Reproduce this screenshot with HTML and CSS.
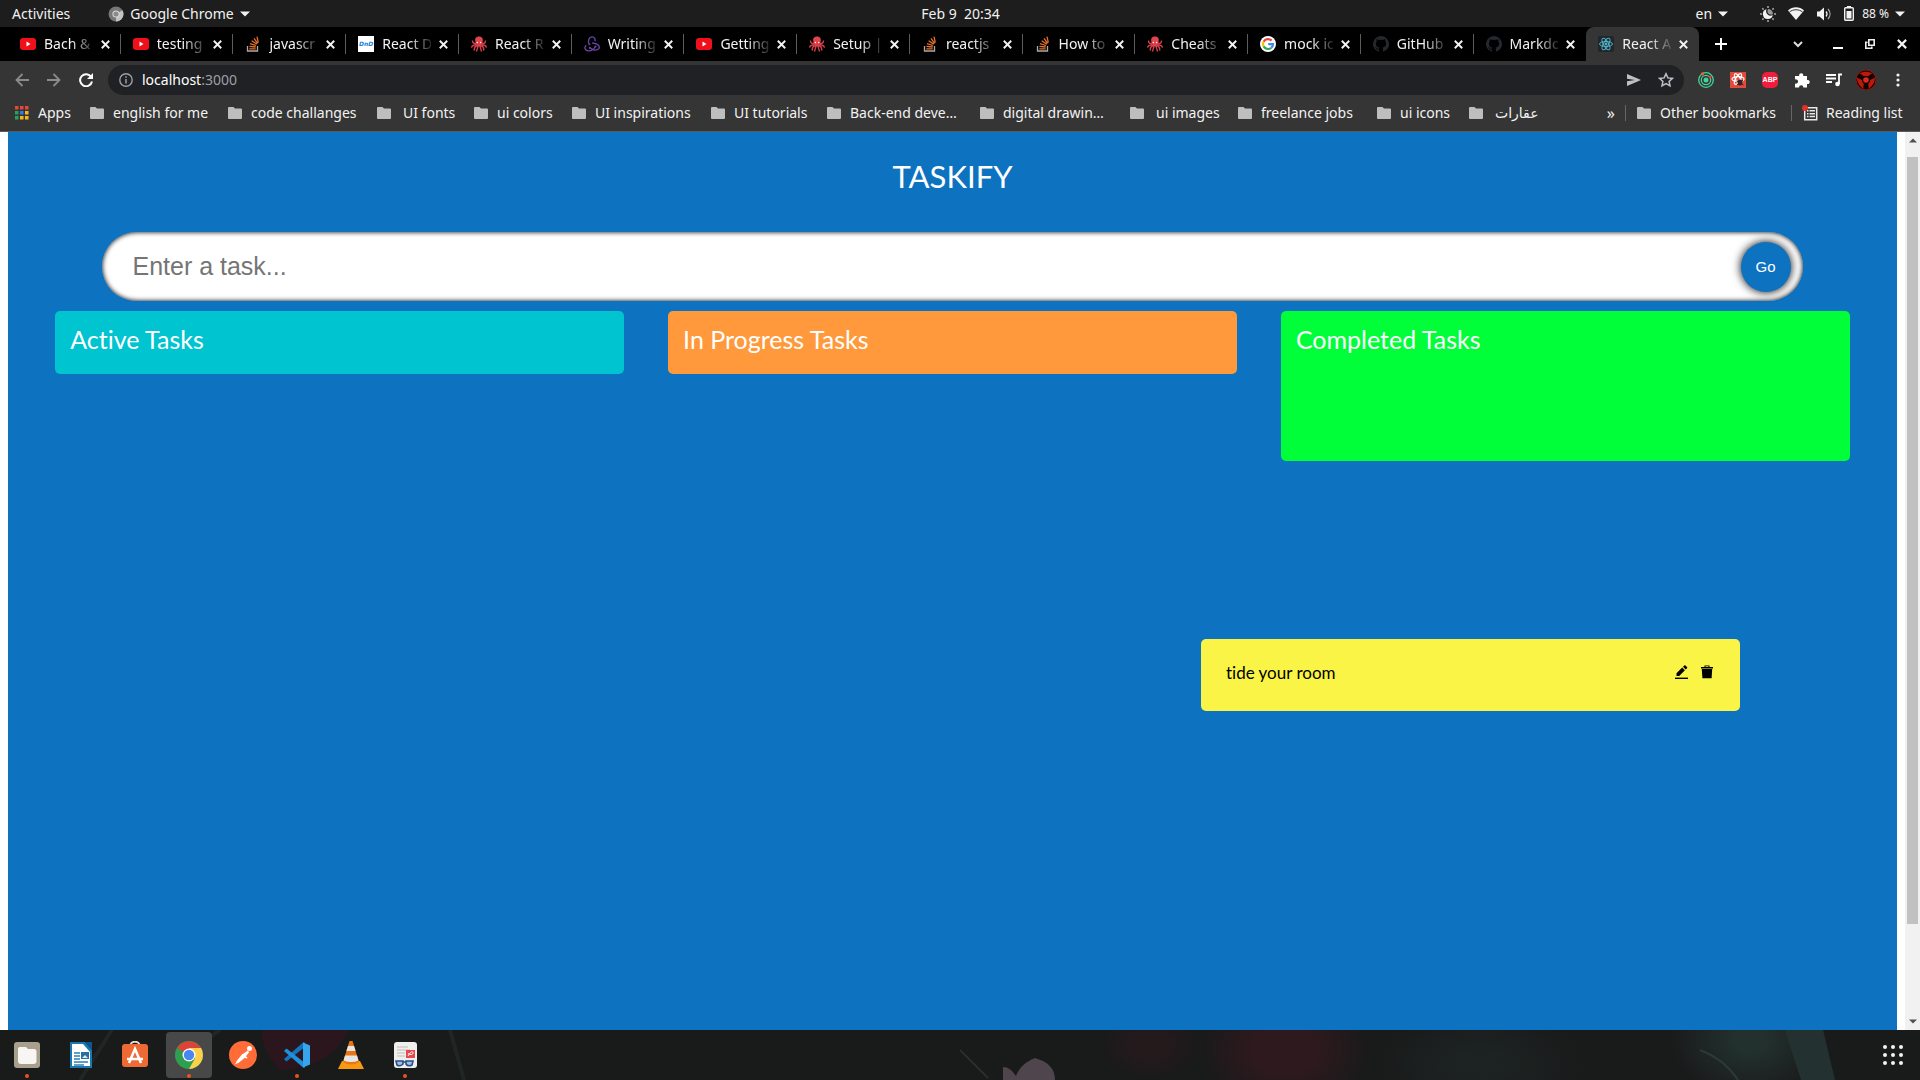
FILE: index.html
```html
<!DOCTYPE html>
<html lang="en">
<head>
<meta charset="utf-8">
<title>React App</title>
<link rel="stylesheet" href="styles.css">
</head>
<body>
<svg class="sprite" aria-hidden="true">
  <symbol id="youtube" viewBox="0 0 16 16"><rect y="2" width="16" height="12" rx="3" fill="#f0101a"/><path d="M6.500 5.500v5l4-2.500z" fill="#fff"/></symbol>
  <symbol id="stack" viewBox="0 0 16 16"><path d="M2.500 10v5h10v-5" fill="none" stroke="#a8abae" stroke-width="1.300"/><path d="M4.300 12.800h6.400M4.400 10.300l6.300.7M5 7.600l6 1.900M6.600 4.700l5.200 3.400M9 2.300l3.600 5M12 .6l1.300 6" stroke="#e8702a" stroke-width="1.300"/></symbol>
  <symbol id="octopus" viewBox="0 0 16 16"><path d="M8 .5c3 0 4.200 2.200 3.800 4.300-.3 1.500-1 2.200-.8 3.200H5c.2-1-.5-1.700-.8-3.200C3.800 2.700 5 .5 8 .5z" fill="#e0444c"/><path d="M5 7C3 8 1.500 7 1.500 4.500M5 8.500c-2 .8-4 .5-4.500 3M6 9.500c-2 1-3.500 2-2.500 5M7 9.500c0 2-.8 3-1.500 6M11 7c2 1 3.500 0 3.500-2.500M11 8.500c2 .8 4 .5 4.500 3M10 9.500c2 1 3.500 2 2.500 5M9 9.500c0 2 .8 3 1.500 6" fill="none" stroke="#d8404a" stroke-width="1.400"/><path d="M4.500 7h7L10 10.500H6z" fill="#d8404a"/><circle cx="6.300" cy="6.500" r=".7" fill="#fff"/><circle cx="9.700" cy="6.500" r=".7" fill="#fff"/></symbol>
  <symbol id="redux" viewBox="0 0 16 16"><g fill="none" stroke="#6b46a8" stroke-width="1.300"><path d="M11.500 10.200C10.800 13 7.500 15.200 4 14.800 1 14.500-.2 11.500 2.200 9.300"/><path d="M5.200 7.800C3.500 5.200 5 .8 8 .8c2.600 0 3.600 2.400 3 4.400"/><path d="M6 11.800c2.500 2.500 6.500 3 8.500 1.300 2-2.200-.2-6-6.500-6.300"/></g><g fill="#6b46a8"><circle cx="11.500" cy="10.400" r="1"/><circle cx="5.400" cy="8.200" r="1"/><circle cx="5.800" cy="11.800" r="1"/></g></symbol>
  <symbol id="google" viewBox="0 0 16 16"><circle cx="8" cy="8" r="8" fill="#fff"/><g fill="none" stroke-width="2.200"><path d="M11.500 4.600A5 5 0 0 0 3.600 5.700" stroke="#ea4335"/><path d="M3.600 5.700a5 5 0 0 0 0 4.700" stroke="#fbbc05"/><path d="M3.600 10.400A5 5 0 0 0 11.300 11.700" stroke="#34a853"/><path d="M11.300 11.700A5 5 0 0 0 13 8.200H8.200" stroke="#4285f4"/></g></symbol>
  <symbol id="github" viewBox="0 0 16 16"><path fill="#24292f" d="M8 0a8 8 0 0 0-2.500 15.600c.4.100.5-.2.500-.4v-1.500c-2.200.5-2.700-.9-2.700-.9-.4-.9-.9-1.200-.9-1.200-.7-.5.100-.5.100-.5.800.1 1.200.8 1.200.8.700 1.300 1.900.9 2.300.7.100-.5.300-.9.500-1.100-1.800-.2-3.600-.9-3.600-4 0-.8.300-1.600.8-2.100 0-.2-.3-1 .1-2.100 0 0 .7-.2 2.200.8a7.600 7.600 0 0 1 4 0c1.500-1 2.200-.8 2.200-.8.400 1.100.1 1.900.1 2.100.5.500.8 1.300.8 2.100 0 3.100-1.900 3.800-3.700 4 .3.300.6.800.6 1.500v2.200c0 .2.100.5.500.4A8 8 0 0 0 8 0z"/></symbol>
  <symbol id="reactapp" viewBox="0 0 16 16"><rect width="16" height="16" rx="2" fill="#22252a"/><g fill="none" stroke="#4fb3c9"><ellipse cx="8" cy="8" rx="6.500" ry="2.500"/><ellipse cx="8" cy="8" rx="6.500" ry="2.500" transform="rotate(60 8 8)"/><ellipse cx="8" cy="8" rx="6.500" ry="2.500" transform="rotate(120 8 8)"/></g><circle cx="8" cy="8" r="1.400" fill="#4fb3c9"/></symbol>
  <symbol id="close" viewBox="0 0 8 8"><path d="M.7.700l6.600 6.600M7.300.700L.7 7.300" stroke="currentColor" stroke-width="1.700"/></symbol>
  <symbol id="folder" viewBox="0 0 14 12"><path d="M1 0h4.500L7 1.600h6a1 1 0 0 1 1 1V11a1 1 0 0 1-1 1H1a1 1 0 0 1-1-1V1a1 1 0 0 1 1-1z" fill="#bebebe"/></symbol>
  <symbol id="caret" viewBox="0 0 10 6"><path d="M0 .5h10L5 5.500z" fill="#f2f2f2"/></symbol>
</svg>

<header class="panel">
  <div class="panel-left">
    <button class="plain">Activities</button>
    <button class="plain app-menu">
      <svg width="16" height="16" viewBox="0 0 16 16"><circle cx="8" cy="8" r="7.500" fill="#777"/><path d="M8 8l6.500-3.700A7.500 7.500 0 0 1 8 15.500z" fill="#c4c4c4"/><circle cx="8" cy="8" r="3.600" fill="#ddd"/><circle cx="8" cy="8" r="2.600" fill="#8a8a8a"/></svg>
      <span>Google Chrome</span>
      <svg width="10" height="6"><use href="#caret"/></svg>
    </button>
  </div>
  <time class="clock">Feb 9&nbsp; 20:34</time>
  <div class="panel-right">
    <button class="plain lang"><span>en</span><svg width="10" height="6"><use href="#caret"/></svg></button>
    <button class="plain status" aria-label="System menu">
      <svg width="16" height="16" viewBox="0 0 16 16"><g stroke="#aaa" stroke-width="1.500"><path d="M8 0v2M8 14v2M0 8h2M14 8h2M2.300 2.300l1.300 1.300M12.400 12.400l1.300 1.300M2.300 13.700l1.300-1.300M12.400 3.600l1.300-1.300"/></g><path d="M6.500 3.300A5 5 0 1 0 12.800 9 4.500 4.500 0 0 1 6.500 3.300z" fill="#f2f2f2"/><path d="M8 3a5 5 0 0 1 5 5c-3 2-7-1-5-5z" fill="#999"/></svg>
      <svg width="16" height="13" viewBox="0 0 16 13"><path d="M0 3.500C4.500-.8 11.500-.8 16 3.500L8 13z" fill="#f2f2f2"/><path d="M1.500 5C5 2 11 2 14.500 5" fill="none" stroke="#1d1d1d" stroke-width=".9"/></svg>
      <svg width="16" height="14" viewBox="0 0 16 14"><path d="M1 4.500h2.500L8 .5v13L3.500 9.500H1z" fill="#f2f2f2"/><path d="M10 4.500c1.300 1.500 1.300 3.500 0 5" fill="none" stroke="#f2f2f2" stroke-width="1.200"/><path d="M12 2c2.700 3 2.700 7 0 10" fill="none" stroke="#aaa" stroke-width="1.200"/></svg>
      <svg width="10" height="15" viewBox="0 0 10 15"><path d="M3 0h4v2H3z" fill="#f2f2f2"/><rect x=".7" y="1.700" width="8.600" height="12.600" rx="1" fill="none" stroke="#f2f2f2" stroke-width="1.400"/><path d="M2.500 5h5v7.500h-5z" fill="#f2f2f2"/></svg>
      <span class="battery">88 %</span>
      <svg width="10" height="6"><use href="#caret"/></svg>
    </button>
  </div>
</header>

<nav class="tabstrip">
  <div class="tabs">
    <div class="tab"><svg class="fav"><use href="#youtube"/></svg><span>Bach &amp;</span><button aria-label="Close tab"><svg><use href="#close"/></svg></button></div>
    <div class="tab"><svg class="fav"><use href="#youtube"/></svg><span>testing</span><button aria-label="Close tab"><svg><use href="#close"/></svg></button></div>
    <div class="tab"><svg class="fav"><use href="#stack"/></svg><span>javascr</span><button aria-label="Close tab"><svg><use href="#close"/></svg></button></div>
    <div class="tab"><b class="fav dnd">DnD</b><span>React D</span><button aria-label="Close tab"><svg><use href="#close"/></svg></button></div>
    <div class="tab"><svg class="fav"><use href="#octopus"/></svg><span>React R</span><button aria-label="Close tab"><svg><use href="#close"/></svg></button></div>
    <div class="tab"><svg class="fav"><use href="#redux"/></svg><span>Writing</span><button aria-label="Close tab"><svg><use href="#close"/></svg></button></div>
    <div class="tab"><svg class="fav"><use href="#youtube"/></svg><span>Getting</span><button aria-label="Close tab"><svg><use href="#close"/></svg></button></div>
    <div class="tab"><svg class="fav"><use href="#octopus"/></svg><span>Setup |</span><button aria-label="Close tab"><svg><use href="#close"/></svg></button></div>
    <div class="tab"><svg class="fav"><use href="#stack"/></svg><span>reactjs</span><button aria-label="Close tab"><svg><use href="#close"/></svg></button></div>
    <div class="tab"><svg class="fav"><use href="#stack"/></svg><span>How to</span><button aria-label="Close tab"><svg><use href="#close"/></svg></button></div>
    <div class="tab"><svg class="fav"><use href="#octopus"/></svg><span>Cheats</span><button aria-label="Close tab"><svg><use href="#close"/></svg></button></div>
    <div class="tab"><svg class="fav"><use href="#google"/></svg><span>mock ic</span><button aria-label="Close tab"><svg><use href="#close"/></svg></button></div>
    <div class="tab"><svg class="fav"><use href="#github"/></svg><span>GitHub</span><button aria-label="Close tab"><svg><use href="#close"/></svg></button></div>
    <div class="tab"><svg class="fav"><use href="#github"/></svg><span>Markdo</span><button aria-label="Close tab"><svg><use href="#close"/></svg></button></div>
    <div class="tab active"><svg class="fav"><use href="#reactapp"/></svg><span>React A</span><button aria-label="Close tab"><svg><use href="#close"/></svg></button></div>
  </div>
  <div class="window-controls">
    <button aria-label="New tab"><svg width="12" height="12" viewBox="0 0 12 12"><path d="M6 0v12M0 6h12" stroke="#fff" stroke-width="2"/></svg></button>
    <button class="push" aria-label="Search tabs"><svg width="10" height="7" viewBox="0 0 10 7"><path d="M1 1l4 4 4-4" fill="none" stroke="#ddd" stroke-width="2"/></svg></button>
    <button aria-label="Minimize"><svg width="10" height="10" viewBox="0 0 10 10"><path d="M0 9h10" stroke="#fff" stroke-width="2"/></svg></button>
    <button aria-label="Restore"><svg width="10" height="10" viewBox="0 0 10 10"><path d="M3.800.800h5.400v5.400H3.800zM2.500 3.200H.8v6h6V7.500" fill="none" stroke="#eee" stroke-width="1.600"/></svg></button>
    <button aria-label="Close window"><svg width="10" height="10"><use href="#close"/></svg></button>
  </div>
</nav>

<div class="toolbar">
  <button aria-label="Back"><svg width="14" height="14" viewBox="0 0 14 14"><path d="M14 7H1.500M7.500 1l-6 6 6 6" fill="none" stroke="#8b8b8b" stroke-width="1.800"/></svg></button>
  <button aria-label="Forward"><svg width="14" height="14" viewBox="0 0 14 14"><path d="M0 7h12.500M6.500 1l6 6-6 6" fill="none" stroke="#8b8b8b" stroke-width="1.800"/></svg></button>
  <button aria-label="Reload"><svg width="14" height="14" viewBox="0 0 14 14"><path d="M12.200 4A6 6 0 1 0 13 8.500" fill="none" stroke="#fff" stroke-width="2"/><path d="M14 0v6H8z" fill="#fff"/></svg></button>
  <div class="omnibox">
    <svg width="14" height="14" viewBox="0 0 14 14"><circle cx="7" cy="7" r="6.200" fill="none" stroke="#9aa0a6" stroke-width="1.400"/><path d="M7 6v4.500M7 3.300v1.500" stroke="#9aa0a6" stroke-width="1.500"/></svg>
    <a class="address" href="#">localhost<span>:3000</span></a>
    <svg width="14" height="12" viewBox="0 0 14 12"><path d="M0 0l14 6-14 6V7.300L8 6 0 4.700z" fill="#bdc1c6"/></svg>
    <svg width="16" height="16" viewBox="0 0 16 16"><path d="M8 1.800l1.900 4.100 4.500.5-3.300 3 .9 4.400L8 11.600l-4 2.200.9-4.400-3.300-3 4.500-.5z" fill="none" stroke="#bdc1c6" stroke-width="1.500"/></svg>
  </div>
  <button aria-label="Circles extension"><svg width="16" height="16" viewBox="0 0 16 16"><g fill="none" stroke="#45d39b" stroke-width="1.300"><circle cx="8" cy="8" r="7.300"/><circle cx="8" cy="8" r="4.700"/></g><circle cx="8" cy="8" r="2.500" fill="#45d39b"/><circle cx="4.500" cy="1.800" r="1.600" fill="#e9662f"/><circle cx="12" cy="5" r="1.500" fill="#d9482d"/></svg></button>
  <button aria-label="React developer tools"><svg width="16" height="16" viewBox="0 0 16 16"><path fill="#e24a3b" d="M0 0h16v16H0z"/><g fill="none" stroke="#fff" stroke-width="1.200"><ellipse cx="8" cy="7" rx="6" ry="2.300"/><ellipse cx="8" cy="7" rx="6" ry="2.300" transform="rotate(60 8 7)"/><ellipse cx="8" cy="7" rx="6" ry="2.300" transform="rotate(120 8 7)"/></g><ellipse cx="10" cy="10.500" rx="2.500" ry="3" fill="#3a2020"/><path d="M6.500 9l7 4M7 13l6-5" stroke="#3a2020"/></svg></button>
  <button aria-label="Adblock Plus" class="abp"><span>ABP</span></button>
  <button aria-label="Extensions"><svg width="16" height="16" viewBox="0 0 16 16"><path d="M1 4h4.200a2.100 2.100 0 1 1 4 0H13v4a2.100 2.100 0 1 1 0 4v3.500H9.400a2.200 2.200 0 1 0-4.400 0H1v-4a2.200 2.200 0 1 0 0-4z" fill="#fff"/></svg></button>
  <button aria-label="Media"><svg width="16" height="14" viewBox="0 0 16 14"><path d="M0 2h10M0 5.500h10M0 9h6M13 11V1.500h3" fill="none" stroke="#fff" stroke-width="1.800"/><circle cx="11.500" cy="11" r="2.300" fill="#fff"/></svg></button>
  <button aria-label="Profile"><svg width="22" height="22" viewBox="0 0 22 22"><circle cx="11" cy="11" r="10" fill="#100404" stroke="#8e1710"/><path id="blade" d="M4.500 4.500C8 2 14 2 17.500 4.500 15 5 13.500 8 11 8S7 5 4.500 4.500z" fill="#b9190e"/><use href="#blade" transform="rotate(120 11 11)"/><use href="#blade" transform="rotate(240 11 11)"/><circle cx="11" cy="11" r="4" fill="#100404"/><circle cx="11" cy="11" r="2.800" fill="#e02a18"/></svg></button>
  <button aria-label="Menu"><svg width="4" height="14" viewBox="0 0 4 14"><g fill="#f2f2f2"><circle cx="2" cy="2" r="1.600"/><circle cx="2" cy="7" r="1.600"/><circle cx="2" cy="12" r="1.600"/></g></svg></button>
</div>

<nav class="bookmarks">
  <div class="bookmark-list">
    <a href="#"><svg width="14" height="14" viewBox="0 0 14 14"><path fill="#e8453c" d="M0 0h3.500v3.500H0zM5 0h3.500v3.500H5zM10 0h3.500v3.500H10z"/><path fill="#21a558" d="M0 5h3.500v3.500H0zM0 10h3.500v3.500H0z"/><path fill="#2a7cf0" d="M5 5h3.500v3.500H5z"/><path fill="#f5b71c" d="M10 5h3.500v3.500H10zM5 10h3.500v3.500H5zM10 10h3.500v3.500H10z"/></svg>Apps</a>
    <a href="#"><svg class="dir"><use href="#folder"/></svg>english for me</a>
    <a href="#"><svg class="dir"><use href="#folder"/></svg>code challanges</a>
    <a href="#" class="spaced"><svg class="dir"><use href="#folder"/></svg>UI fonts</a>
    <a href="#"><svg class="dir"><use href="#folder"/></svg>ui colors</a>
    <a href="#"><svg class="dir"><use href="#folder"/></svg>UI inspirations</a>
    <a href="#"><svg class="dir"><use href="#folder"/></svg>UI tutorials</a>
    <a href="#"><svg class="dir"><use href="#folder"/></svg>Back-end deve…</a>
    <a href="#"><svg class="dir"><use href="#folder"/></svg>digital drawin…</a>
    <a href="#" class="spaced"><svg class="dir"><use href="#folder"/></svg>ui images</a>
    <a href="#"><svg class="dir"><use href="#folder"/></svg>freelance jobs</a>
    <a href="#"><svg class="dir"><use href="#folder"/></svg>ui icons</a>
    <a href="#" class="spaced"><svg class="dir"><use href="#folder"/></svg>عقارات</a>
  </div>
  <button class="plain more">»</button>
  <a class="ruled other" href="#"><svg class="dir"><use href="#folder"/></svg>Other bookmarks</a>
  <a class="ruled reading" href="#"><svg width="16" height="16" viewBox="0 0 16 16"><path d="M2.700 2.700h12v12h-12z" fill="none" stroke="#e8e8e8" stroke-width="1.500"/><path d="M5 5.800h1.500M5 8.700h1.500M5 11.600h1.500M7.500 5.800H13M7.500 8.700H13M7.500 11.600H13" stroke="#e8e8e8" stroke-width="1.500"/><circle cx="3" cy="3" r="3" fill="#e23228"/></svg>Reading list</a>
</nav>

<div class="viewport">
  <main class="app">
    <h1>TASKIFY</h1>
    <form class="task-form">
      <input type="text" placeholder="Enter a task..." aria-label="Task">
      <button type="button">Go</button>
    </form>
    <div class="board">
      <section class="list todo"><h2>Active Tasks</h2></section>
      <section class="list doing"><h2>In Progress Tasks</h2></section>
      <section class="list done"><h2>Completed Tasks</h2></section>
    </div>
    <article class="card">
      <p>tide your room</p>
      <button aria-label="Edit"><svg width="14" height="14" viewBox="0 0 14 14"><path d="M1 13.300h13" stroke="#000" stroke-width="1.400"/><path d="M2.500 11V8.300L8.200 2.600l2.700 2.700L5.200 11zM9 1.800L10.300.500a.9.900 0 0 1 1.200 0L13 2a.9.900 0 0 1 0 1.200l-1.300 1.300z"/></svg></button>
      <button aria-label="Delete"><svg width="14" height="14" viewBox="0 0 14 14"><path d="M1 2h3.500V.5h5V2H13v1.500H1zM5.500 1.300V2h3v-.7zM1.800 4h10.400l-.6 9.300H2.400z" fill-rule="evenodd"/></svg></button>
    </article>
  </main>
  <div class="scrollbar" aria-hidden="true">
    <svg width="8" height="5" viewBox="0 0 8 5"><path d="M0 4.500L4 .5l4 4z" fill="#505050"/></svg>
    <div class="track"><div class="thumb"></div></div>
    <svg width="8" height="5" viewBox="0 0 8 5"><path d="M0 .5l4 4 4-4z" fill="#505050"/></svg>
  </div>
</div>

<footer class="dock">
  <svg class="wallpaper" viewBox="0 0 1920 50" preserveAspectRatio="none" aria-hidden="true">
    <defs>
      <radialGradient id="rose"><stop offset=".4" stop-color="#2d191e"/><stop offset="1" stop-color="#2d191e" stop-opacity="0"/></radialGradient>
      <radialGradient id="leaf"><stop offset=".2" stop-color="#22302e"/><stop offset="1" stop-color="#22302e" stop-opacity="0"/></radialGradient>
    </defs>
    <path d="M262 0h86c-5 18-30 40-68 40-12-12-20-28-18-40z" fill="#2b161d"/>
    <path d="M112 0L80 50M220 0l-25 18M450 0l14 50" stroke="#202625" stroke-width="4" fill="none"/>
    <ellipse cx="1285" cy="20" rx="85" ry="60" fill="url(#rose)"/>
    <ellipse cx="1150" cy="15" rx="50" ry="35" fill="url(#rose)" opacity=".5"/>
    <ellipse cx="1480" cy="35" rx="110" ry="60" fill="url(#leaf)" opacity=".4"/>
    <ellipse cx="1750" cy="10" rx="80" ry="60" fill="url(#leaf)"/>
    <path d="M1785 0h38l12 50h-34z" fill="#233230"/>
    <path d="M1700 20c20 8 30 18 38 30" fill="none" stroke="#2c3a37" stroke-width="2"/>
    <path d="M1003 50V37c5 0 9 3 13 9 3-8 9-14 19-18 14 4 20 11 20 22z" fill="#4e454d"/>
    <path d="M960 20l28 28" stroke="#24312f" stroke-width="2" fill="none"/>
  </svg>
  <div class="launchers">
    <button class="running" aria-label="Files"><svg viewBox="0 0 28 28"><rect x="1" y="1" width="26" height="26" rx="3" fill="#a8a08c"/><path d="M5 8q0-2 2-2h6l2 2h6q2.500 0 2.500 2.500V20q0 3-3 3H8q-3 0-3-3z" fill="#f7f6f3"/></svg></button>
    <button aria-label="Writer"><svg viewBox="0 0 28 28"><path d="M3 1h15l7 8v18H3z" fill="#1878b4"/><path d="M5 3h11l7 8v14H5z" fill="#fff"/><path d="M18 1h7v8z" fill="#0d578e"/><path d="M7 12h6M7 15h6M7 18h6M7 21h14M7 24h10" stroke="#2b7fb5" stroke-width="1.400"/><path d="M14 11h8v7h-8z" fill="#2a6d9c"/><path d="M15 17l3-3 3 3z" fill="#d8e8f2"/></svg></button>
    <button aria-label="Software"><svg viewBox="0 0 28 28"><path d="M9 6c0-7 10-7 10 0" fill="none" stroke="#e9d9c8" stroke-width="2"/><rect x="1" y="3" width="26" height="23" rx="3" fill="#ee6a35"/><path d="M8 22l6-14 6 14M6 18h16" fill="none" stroke="#fff" stroke-width="2.500"/></svg></button>
    <button class="running focused" aria-label="Chrome"><svg viewBox="0 0 28 28"><circle cx="14" cy="14" r="14" fill="#2f9e4f"/><path d="M14 14L2 7a14 14 0 0 1 24 0z" fill="#dc4437"/><path d="M14 7h12.100A14 14 0 0 1 14 28l6-10.500z" fill="#fdd04c"/><circle cx="14" cy="14" r="6.500" fill="#fff"/><circle cx="14" cy="14" r="5.200" fill="#4a86f0"/></svg></button>
    <button aria-label="Postman"><svg viewBox="0 0 28 28"><circle cx="14" cy="14" r="14" fill="#ff6c37"/><circle cx="20.500" cy="7.500" r="2.500" fill="#fff"/><path d="M19 9.500l-6 4-5 6-2 4 4-2 5-4 5-6z" fill="#fff"/><path d="M13 14l5 3" stroke="#fff" stroke-width="1.500"/></svg></button>
    <button class="running" aria-label="Code"><svg viewBox="0 0 28 28"><path d="M1 18l2.500 2.500L22 6V1.500h-2z" fill="#1175bd"/><path d="M1 10l2.500-2.500L22 22v4.500h-2z" fill="#2190dc"/><path d="M20 1.500l7 3v19l-7 3z" fill="#35a5ee"/></svg></button>
    <button aria-label="VLC"><svg viewBox="0 0 28 28"><path d="M5 20h18l4 8H1z" fill="#f79a12"/><path d="M12.500 0h3L22 21q-8 5-16 0z" fill="#ed7412"/><path d="M11 5h6l1.600 5H9.400zM8 14.500h12l1.500 5q-7 3-15 0z" fill="#e6e6e6"/></svg></button>
    <button class="running" aria-label="Document viewer"><svg viewBox="0 0 28 28"><rect x="3" y="1" width="23" height="26" rx="3" fill="#f0efed"/><path d="M6 6h11M6 9h13M6 12h8M6 15h8" stroke="#bdbdb5" stroke-width="1.200"/><path d="M15 9h9v8h-9z" fill="#e5484d"/><path d="M17 15c3-5 5-5 5-3s-4 2-5 0" fill="none" stroke="#fff"/><path d="M5 20h7v3q-3 3-6 1zM15 20h7l-1 4q-4 2-6-1zM12 21h3" fill="#a6bddb" stroke="#234f8c" stroke-width="1.600"/></svg></button>
  </div>
  <button class="show-apps" aria-label="Show applications"><svg width="20" height="20" viewBox="0 0 20 20"><g fill="#f2f2f2"><circle cx="2" cy="2" r="2"/><circle cx="10" cy="2" r="2"/><circle cx="18" cy="2" r="2"/><circle cx="2" cy="10" r="2"/><circle cx="10" cy="10" r="2"/><circle cx="18" cy="10" r="2"/><circle cx="2" cy="18" r="2"/><circle cx="10" cy="18" r="2"/><circle cx="18" cy="18" r="2"/></g></svg></button>
</footer>
</body>
</html>
```
FILE: styles.css
```css
* { box-sizing: border-box; }

body {
  margin: 0;
  min-height: 100vh;
  display: flex;
  flex-direction: column;
  font: 14px/20px "Noto Sans", "DejaVu Sans", sans-serif;
  color: #f2f2f2;
  background: #fff;
}

button {
  padding: 0;
  border: 0;
  background: none;
  color: inherit;
  font: inherit;
}

a { color: inherit; text-decoration: none; }
svg { display: block; flex: none; }
.sprite { position: absolute; width: 0; height: 0; }

/* desktop panel */
.panel {
  display: grid;
  grid-template-columns: 1fr auto 1fr;
  align-items: center;
  height: 27px;
  padding: 0 15px 0 12px;
  background: #1d1d1d;
}
.panel-left, .panel-right, .plain { display: flex; align-items: center; }
.panel-left { gap: 38px; }
.panel-right { justify-content: flex-end; gap: 32px; }
.clock { padding-left: 4px; }
.app-menu { gap: 6px; }
.lang { gap: 6px; }
.status { gap: 12px; }
.status .battery { font-size: 12px; margin: 0 -6px 0 -4px; }

/* tab strip */
.tabstrip { display: flex; height: 34px; padding-left: 8px; background: #000; }
.tabs { display: flex; flex: 1; min-width: 0; }
.tab {
  position: relative;
  display: flex;
  flex: 1 1 0;
  min-width: 0;
  align-items: center;
  padding: 0 11px 0 12px;
}
.tab::after {
  content: "";
  position: absolute;
  right: 0;
  top: 7px;
  width: 1px;
  height: 20px;
  background: #5c5c5c;
}
.tab:nth-last-child(-n+2)::after { display: none; }
.tab.active { background: #353535; border-radius: 8px 8px 0 0; }
.fav { width: 16px; height: 16px; flex: none; }
.dnd {
  background: #fff;
  color: #1a80d0;
  font: italic bold 6px/16px "DejaVu Sans", sans-serif;
  text-align: center;
}
.tab span {
  flex: 1;
  min-width: 0;
  margin-left: 8px;
  white-space: nowrap;
  -webkit-mask-image: linear-gradient(90deg, #000 55%, rgba(0, 0, 0, .15));
  mask-image: linear-gradient(90deg, #000 55%, rgba(0, 0, 0, .15));
}
.tab button { margin-left: 8px; }
.tab button svg { width: 9px; height: 9px; }
.window-controls {
  display: flex;
  flex: 0 0 221px;
  align-items: center;
  gap: 22px;
  padding: 0 13px 0 16px;
}
.push { margin: 0 8px 0 auto; }

/* toolbar */
.toolbar {
  display: flex;
  align-items: center;
  height: 37px;
  padding: 0 6px;
  background: #353535;
}
.toolbar > button { display: flex; justify-content: center; flex: 0 0 32px; }
.omnibox {
  display: flex;
  flex: 1;
  align-items: center;
  gap: 9px;
  height: 30px;
  margin: 0 6px;
  padding: 0 10px 0 11px;
  border-radius: 15px;
  background: #202124;
}
.omnibox svg:last-child { margin-left: 8px; }
.address { flex: 1; color: #fff; }
.address span { color: #9aa0a6; }
.abp span {
  width: 16px;
  border-radius: 5px;
  background: #f01e3c;
  color: #fff;
  font: bold 7px/16px "Liberation Sans", sans-serif;
}

/* bookmarks bar */
.bookmarks {
  display: flex;
  align-items: center;
  height: 34px;
  padding: 0 0 3px 15px;
  border-bottom: 1px solid #5a5a5a;
  background: #353535;
  white-space: nowrap;
}
.bookmarks a { display: flex; align-items: center; gap: 9px; }
.bookmark-list {
  display: grid;
  flex: 1;
  grid-template-columns: 75px 138px 149px 97px 98px 139px 116px 153px 150px 108px 139px 92px auto;
}
.bookmarks .spaced { gap: 12px; }
.dir { width: 14px; height: 12px; }
.more { margin-right: 10px; font-size: 16px; }
.ruled { border-left: 1px solid #666; height: 16px; padding-left: 11px; }
.other { width: 166px; }
.bookmarks .reading { width: 129px; padding-left: 10px; gap: 8px; }

/* page */
.viewport { display: flex; flex: 1; background: #fff; }
.app {
  flex: 1;
  margin: 0 8px;
  background: #0d72bf;
  color: #fff;
  font-family: Lato, "Liberation Sans", sans-serif;
  font-variant-ligatures: none;
}
.app h1 {
  margin: 0;
  padding: 24px 0;
  font-size: 31px;
  font-weight: 400;
  line-height: 40px;
  text-align: center;
}
.task-form { position: relative; width: 90%; margin: 12px auto 10px; }
.task-form input {
  display: block;
  width: 100%;
  height: 69px;
  padding: 20px 30px;
  border: 0;
  border-radius: 50px;
  background: #fff;
  box-shadow: inset 0 0 5px #000;
  font: 25px/29px "Liberation Sans", Arial, sans-serif;
}
.task-form input::placeholder { color: #757575; }
.task-form button {
  position: absolute;
  top: 10px;
  right: 12px;
  width: 50px;
  height: 50px;
  border-radius: 50%;
  background: #0d72bf;
  box-shadow: 0 0 10px #000;
  font: 15px/20px "Liberation Sans", Arial, sans-serif;
}
.board {
  display: grid;
  grid-template-columns: repeat(3, 1fr);
  gap: 44px;
  align-items: start;
  width: 95%;
  margin: 0 auto;
}
.list { padding: 10px 15px 17px; border-radius: 5px; }
.list h2 { margin: 0; font-size: 25px; font-weight: 400; line-height: 36px; }
.todo { background: #00c4cf; }
.doing { background: #ff993b; }
.done { min-height: 150px; background: #00ff38; }

/* card being dragged over the board */
.card {
  position: absolute;
  left: 1201px;
  top: 639px;
  display: flex;
  align-items: flex-start;
  gap: 12px;
  width: 539px;
  padding: 20px 26px 24px 25px;
  border-radius: 5px;
  background: #f9f445;
  color: #000;
}
.card p { flex: 1; margin: 0; font-size: 17px; line-height: 28px; }
.card button { padding-top: 6px; }

.scrollbar {
  display: flex;
  flex-direction: column;
  align-items: center;
  gap: 9px;
  width: 15px;
  padding: 6px 2px;
  background: #f1f1f1;
}
.track { flex: 1; align-self: stretch; }
.thumb { height: calc(100% - 91px); margin-top: 5px; background: #c1c1c1; }

/* dock */
.dock {
  position: relative;
  display: flex;
  justify-content: space-between;
  align-items: center;
  height: 50px;
  padding: 0 17px 0 0;
  background: #191a1a;
}
.wallpaper { position: absolute; inset: 0; width: 100%; height: 100%; }
.launchers { position: relative; display: flex; gap: 8px; padding-left: 4px; }
.launchers button {
  position: relative;
  display: flex;
  align-items: center;
  justify-content: center;
  width: 46px;
  height: 46px;
  border-radius: 4px;
}
.launchers svg { width: 28px; height: 28px; }
.focused { background: #484848; }
.running::after {
  content: "";
  position: absolute;
  bottom: 0;
  left: 21px;
  width: 4px;
  height: 4px;
  border-radius: 50%;
  background: #e95420;
}
.show-apps { position: relative; }
```
